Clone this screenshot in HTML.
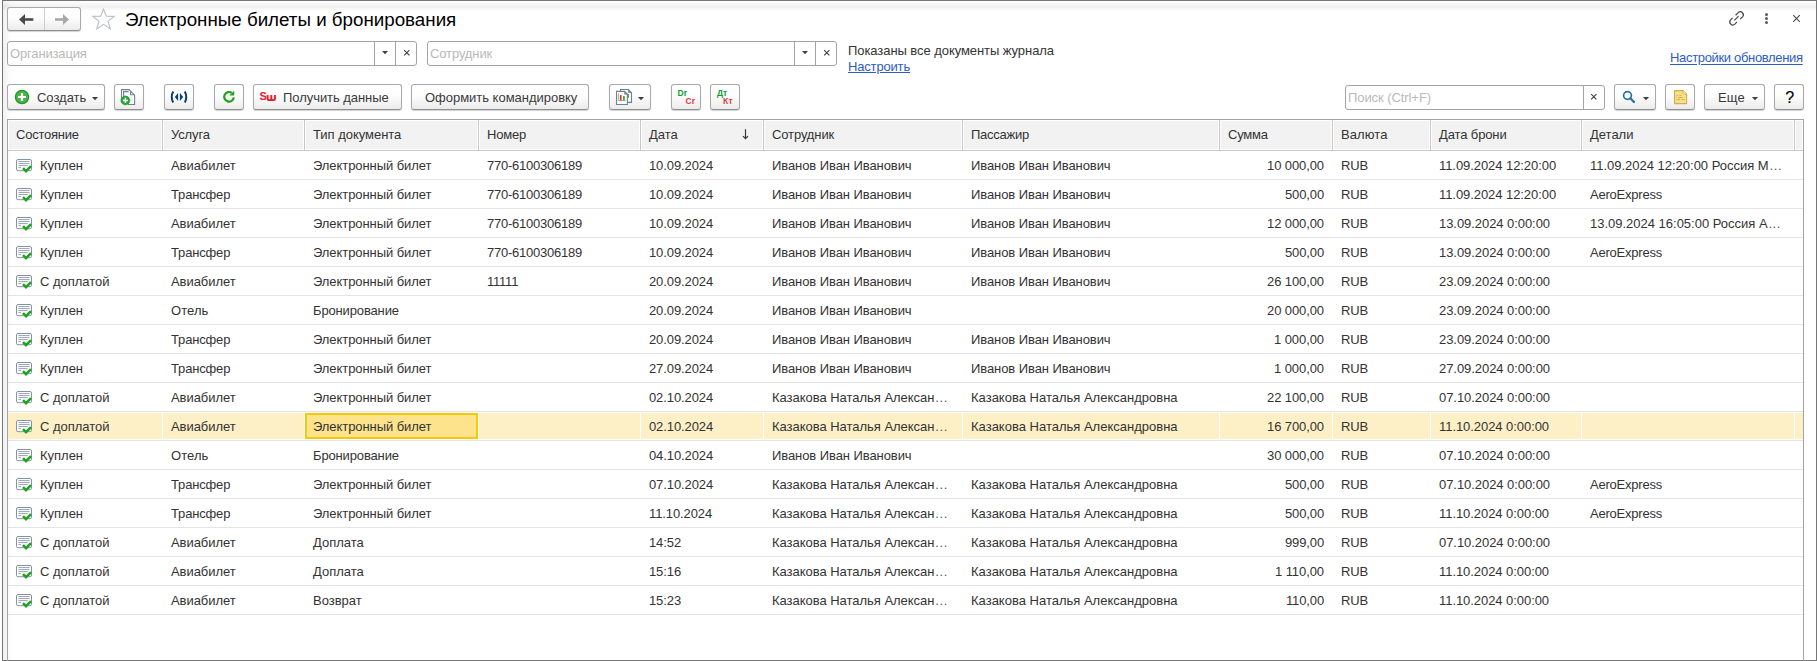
<!DOCTYPE html><html><head><meta charset="utf-8"><title>Электронные билеты и бронирования</title><style>
*{box-sizing:border-box}
html,body{margin:0;padding:0}
body{width:1817px;height:661px;overflow:hidden;position:relative;background:#fff;font-family:"Liberation Sans",sans-serif;font-size:13px;color:#333}
.a{position:absolute}
.t{position:absolute;white-space:nowrap;line-height:16px;height:16px}
.btn{position:absolute;top:84px;height:26px;border:1px solid #a9a9a9;border-bottom-color:#8f8f8f;border-radius:3px;background:linear-gradient(#fff 0%,#fdfdfd 45%,#ebebeb 100%);box-shadow:0 1px 1px rgba(0,0,0,0.18)}
.fld{position:absolute;height:25px;border:1px solid #a4a4a4;border-radius:3px;background:#fff}
.sep{position:absolute;top:0;bottom:0;width:1px;background:#a4a4a4}
.ph{color:#b4b4b4}
.hd{position:absolute;top:120px;height:30px;background:#f2f2f2;border:1px solid #fff;border-bottom-color:#fff}
.hs{position:absolute;top:120px;height:30px;width:1px;background:#c9c9c9}
.rl{position:absolute;left:8px;width:1795px;height:1px;background:#e4e4e4}
.lnk{color:#2c58b8;text-decoration:underline}
</style></head><body><div class="a" style="left:2px;top:0;width:1815px;height:661px;border:1px solid #767676;"></div>
<div class="a" style="left:3px;top:1px;width:9px;height:659px;background:linear-gradient(90deg,rgba(0,0,0,0.055),rgba(0,0,0,0))"></div>
<div class="a" style="left:3px;top:1px;width:1813px;height:10px;background:linear-gradient(rgba(0,0,0,0) 0%,rgba(0,0,0,0.048) 45%,rgba(0,0,0,0.055) 60%,rgba(0,0,0,0) 100%)"></div>
<div class="btn" style="left:7px;top:7px;width:74px;height:24px;"></div>
<div class="a" style="left:44px;top:8px;width:1px;height:22px;background:#cfcfcf"></div>
<svg class="a" style="left:17px;top:12px" width="18" height="15" viewBox="0 0 18 15"><path d="M2 7.5 L8 2 L8 13 Z" fill="#4b4b4b"/><rect x="7" y="6.2" width="9.3" height="2.6" fill="#4b4b4b"/></svg>
<svg class="a" style="left:53px;top:12px" width="18" height="15" viewBox="0 0 18 15"><path d="M16 7.5 L10 2 L10 13 Z" fill="#a8a8a8"/><rect x="2" y="6.2" width="9" height="2.6" fill="#a8a8a8"/></svg>
<svg class="a" style="left:91px;top:7px" width="25" height="24" viewBox="0 0 25 24"><path d="M12.5 2.3 L15.3 9.3 L23.1 9.4 L17 14.3 L19.4 22.0 L12.5 17.4 L5.6 22.0 L8 14.3 L1.9 9.4 L9.7 9.3 Z" fill="none" stroke="#b9c0c8" stroke-width="1.1" stroke-linejoin="miter"/></svg>
<div class="t" style="left:125px;top:12.10px;font-size:18.75px;color:#000;">Электронные билеты и бронирования</div>
<svg class="a" style="left:1720px;top:6px" width="40" height="24" viewBox="0 0 40 24"><g fill="none" stroke="#454545" stroke-width="1.2"><path d="M15.6 9.25 L18.23 6.63 A3 3 0 0 1 22.47 10.87 L20.14 13.2"/><path d="M12.61 11.85 L10.63 13.83 A3 3 0 0 0 14.87 18.07 L16.99 15.95"/><path d="M14.4 14.4 L18.6 10.2"/></g></svg>
<div class="a" style="left:1765px;top:13.0px;width:3px;height:3px;border-radius:50%;background:#5a5a5a"></div>
<div class="a" style="left:1765px;top:17.1px;width:3px;height:3px;border-radius:50%;background:#5a5a5a"></div>
<div class="a" style="left:1765px;top:21.2px;width:3px;height:3px;border-radius:50%;background:#5a5a5a"></div>
<svg class="a" style="left:1791px;top:13px" width="11" height="11" viewBox="0 0 11 11"><path d="M2.2 2.2 L8.8 8.8 M8.8 2.2 L2.2 8.8" stroke="#4a4a4a" stroke-width="1.1"/></svg>
<div class="fld" style="left:7px;top:41px;width:410px;"></div>
<div class="a" style="left:374px;top:42px;width:1px;height:23px;background:#a4a4a4"></div>
<div class="a" style="left:395px;top:42px;width:1px;height:23px;background:#a4a4a4"></div>
<svg class="a" style="left:382px;top:51px" width="7" height="4" viewBox="0 0 7 4"><path d="M0 0 L6 0 L3 3.3 Z" fill="#404040"/></svg>
<svg class="a" style="left:403px;top:49px" width="8" height="8" viewBox="0 0 8 8"><path d="M1.2 1.2 L6.4 6.4 M6.4 1.2 L1.2 6.4" stroke="#3c3c3c" stroke-width="1.1"/></svg>
<div class="t" style="left:10px;top:45.50px;color:#b9b9b9;letter-spacing:-0.154px;">Организация</div>
<div class="fld" style="left:427px;top:41px;width:410px;"></div>
<div class="a" style="left:794px;top:42px;width:1px;height:23px;background:#a4a4a4"></div>
<div class="a" style="left:815px;top:42px;width:1px;height:23px;background:#a4a4a4"></div>
<svg class="a" style="left:802px;top:51px" width="7" height="4" viewBox="0 0 7 4"><path d="M0 0 L6 0 L3 3.3 Z" fill="#404040"/></svg>
<svg class="a" style="left:823px;top:49px" width="8" height="8" viewBox="0 0 8 8"><path d="M1.2 1.2 L6.4 6.4 M6.4 1.2 L1.2 6.4" stroke="#3c3c3c" stroke-width="1.1"/></svg>
<div class="t" style="left:430px;top:45.50px;color:#b9b9b9;letter-spacing:-0.113px;">Сотрудник</div>
<div class="t" style="left:848px;top:42.50px;letter-spacing:-0.066px;">Показаны все документы журнала</div>
<div class="t" style="left:848px;top:58.90px;letter-spacing:-0.169px;color:#2d5cc2;text-decoration:underline;text-underline-offset:1px;">Настроить</div>
<div class="t" style="left:1670px;top:50.20px;color:#2d5cc2;text-decoration:underline;text-underline-offset:1.5px;letter-spacing:-0.33px;">Настройки обновления</div>
<div class="btn" style="left:7px;width:98px;"></div>
<svg class="a" style="left:14px;top:89px" width="16" height="16" viewBox="0 0 16 16"><circle cx="8" cy="8" r="6.6" fill="#4cb24c" stroke="#1f9a2a" stroke-width="1.3"/><path d="M8 4 V12 M4 8 H12" stroke="#fff" stroke-width="2.2"/></svg>
<div class="t" style="left:37px;top:90.20px;color:#3a3a3a;letter-spacing:-0.017px;">Создать</div>
<svg class="a" style="left:91px;top:97px" width="8" height="5" viewBox="0 0 8 5"><path d="M0.9 0 L7.1 0 L4 3.3 Z" fill="#404040"/></svg>
<div class="btn" style="left:114px;width:30px;"></div>
<svg class="a" style="left:116px;top:86px" width="26" height="22" viewBox="0 0 26 22"><path d="M5.5 16.5 V3.6 H13 L18.6 9.2 V18.5 H12" fill="#fff" stroke="#6e8196" stroke-width="1.1"/><path d="M7.6 12 V5.6 H12.6" fill="none" stroke="#6e8196" stroke-width="1.1"/><path d="M14.4 5.4 V8.8 H18" fill="none" stroke="#6e8196" stroke-width="1.1"/><rect x="15" y="11.5" width="1.6" height="5" fill="#e8e8e8"/><circle cx="9.4" cy="14.4" r="4.4" fill="#2aa53a" stroke="#17902a" stroke-width="0.7"/><path d="M9.4 11.8 V17 M6.8 14.4 H12" stroke="#fff" stroke-width="1.5"/></svg>
<div class="btn" style="left:164px;width:30px;"></div>
<svg class="a" style="left:169px;top:89px" width="20" height="16" viewBox="0 0 20 16"><path d="M4.2 2.5 Q1.3 8 4.2 13.5" fill="none" stroke="#0d3f6e" stroke-width="2"/><path d="M15.8 2.5 Q18.7 8 15.8 13.5" fill="none" stroke="#0d3f6e" stroke-width="2"/><path d="M9.1 4.1 L5.8 8 L9.1 11.9 Z" fill="#0d3f6e"/><path d="M10.9 4.1 L14.2 8 L10.9 11.9 Z" fill="#0d3f6e"/></svg>
<div class="btn" style="left:214px;width:30px;"></div>
<svg class="a" style="left:216px;top:86px" width="26" height="22" viewBox="0 0 26 22"><path d="M17.8 11.4 A4.8 4.8 0 1 1 15.8 6.9" fill="none" stroke="#22a022" stroke-width="2.2"/><path d="M13.8 9.2 L18 5.2 L18 9.2 Z" fill="#22a022" stroke="#22a022" stroke-width="0.5" stroke-linejoin="round"/></svg>
<div class="btn" style="left:253px;width:149px;"></div>
<div class="t" style="left:259.6px;top:88.3px;font-size:11px;font-weight:bold;color:#e8202a;line-height:16px">S</div>
<svg class="a" style="left:266px;top:93px" width="11" height="9" viewBox="0 0 11 9"><path d="M1.6 1.9 V5.2 Q1.6 7.1 3.5 7.1 Q5.3 7.1 5.3 5.2 V1.9 M5.3 5.2 Q5.3 7.1 7.1 7.1 Q9 7.1 9 5.2 V1.9" fill="none" stroke="#e8202a" stroke-width="1.9"/></svg>
<div class="t" style="left:283px;top:90.20px;color:#3a3a3a;letter-spacing:-0.052px;">Получить данные</div>
<div class="btn" style="left:411px;width:178px;"></div>
<div class="t" style="left:425px;top:90.20px;color:#3a3a3a;letter-spacing:-0.022px;">Оформить командировку</div>
<div class="btn" style="left:609px;width:42px;"></div>
<svg class="a" style="left:612px;top:86px" width="22" height="22" viewBox="0 0 22 22"><path d="M8.5 3.5 H16.3 L19.5 6.7 V16.4 H8.5 Z" fill="#fff" stroke="#6f8090" stroke-width="1.1"/><path d="M16.3 3.5 V6.7 H19.5 Z" fill="#7d8d9c" stroke="#6f8090" stroke-width="0.6"/><rect x="15.2" y="8" width="1.7" height="3.9" fill="#3aaa2a"/><path d="M4.5 5.4 H12.6 L15.4 8.3 V18.5 H4.5 Z" fill="#fff" stroke="#6f8090" stroke-width="1.1"/><path d="M12.6 5.4 V8.3 H15.4 Z" fill="#7d8d9c" stroke="#6f8090" stroke-width="0.6"/><path d="M6.3 7.3 V14.6 H13.6" fill="none" stroke="#8a8a8a" stroke-width="0.8"/><rect x="7.9" y="9" width="1.7" height="5.2" fill="#e8301e"/><rect x="11" y="10.1" width="1.8" height="4.1" fill="#3aaa2a"/></svg>
<svg class="a" style="left:637px;top:97px" width="8" height="5" viewBox="0 0 8 5"><path d="M0.9 0 L7.1 0 L4 3.3 Z" fill="#404040"/></svg>
<div class="btn" style="left:671px;width:30px;"></div>
<div class="t" style="left:677.6px;top:87px;font-size:8.5px;font-weight:bold;color:#109a3c;line-height:12px">Dr</div>
<div class="t" style="left:685.5px;top:95px;font-size:8.5px;font-weight:bold;color:#e03a3e;line-height:12px">Cr</div>
<div class="btn" style="left:710px;width:30px;"></div>
<div class="t" style="left:717px;top:87px;font-size:8.5px;font-weight:bold;color:#109a3c;line-height:12px">Дт</div>
<div class="t" style="left:723px;top:95px;font-size:8.5px;letter-spacing:0.4px;font-weight:bold;color:#e03a3e;line-height:12px">Кт</div>
<div class="fld" style="left:1345px;top:85px;width:260px;"></div>
<div class="a" style="left:1583px;top:86px;width:1px;height:23px;background:#a4a4a4"></div>
<svg class="a" style="left:1590px;top:93px" width="8" height="8" viewBox="0 0 8 8"><path d="M1.2 1.2 L6.4 6.4 M6.4 1.2 L1.2 6.4" stroke="#3c3c3c" stroke-width="1.1"/></svg>
<div class="t" style="left:1348px;top:89.50px;color:#b9b9b9;letter-spacing:-0.074px;">Поиск (Ctrl+F)</div>
<div class="btn" style="left:1614px;width:42px;"></div>
<svg class="a" style="left:1621px;top:89px" width="16" height="16" viewBox="0 0 16 16"><circle cx="6.5" cy="6.5" r="3.9" fill="none" stroke="#2a70a8" stroke-width="1.7"/><path d="M9.3 9.3 L13 13" stroke="#2a70a8" stroke-width="2.3" stroke-linecap="round"/></svg>
<svg class="a" style="left:1642px;top:97px" width="8" height="5" viewBox="0 0 8 5"><path d="M0.9 0 L7.1 0 L4 3.3 Z" fill="#404040"/></svg>
<div class="btn" style="left:1665px;width:30px;"></div>
<svg class="a" style="left:1673px;top:89px" width="16" height="17" viewBox="0 0 16 17"><path d="M1.6 1.6 H10 Q13.6 4.6 13.6 5.4 V14.6 H1.6 Z" fill="#f6e08c" stroke="#d5ac45" stroke-width="1.1" stroke-linejoin="round"/><path d="M10 1.8 V4.2 Q10 5.2 11 5.2 H13.4" fill="#fff6d0" stroke="#d5ac45" stroke-width="0.9"/><path d="M3.6 6.4 H5 M6.3 6.4 H8.6 M3.6 8.5 H4.1 M5.3 8.5 H9.8 M3.6 10.6 H7 M8.2 10.6 H11.6" stroke="#d4ac48" stroke-width="0.9"/></svg>
<div class="btn" style="left:1704px;width:61px;"></div>
<div class="t" style="left:1718px;top:90.20px;color:#3a3a3a;letter-spacing:0.134px;">Еще</div>
<svg class="a" style="left:1751px;top:97px" width="8" height="5" viewBox="0 0 8 5"><path d="M0.9 0 L7.1 0 L4 3.3 Z" fill="#404040"/></svg>
<div class="btn" style="left:1774px;width:30px;"></div>
<div class="t" style="left:1785.3px;top:89.6px;font-size:16px;color:#000;line-height:16px;-webkit-text-stroke:0.15px #000">?</div>
<div class="a" style="left:7px;top:119px;width:1797px;height:560px;border:1px solid #a3a3a3;"></div>
<div class="a" style="left:8px;top:120px;width:154px;height:30px;background:#f2f2f2;border:1px solid #fff;"></div>
<div class="a" style="left:163px;top:120px;width:141px;height:30px;background:#f2f2f2;border:1px solid #fff;"></div>
<div class="a" style="left:305px;top:120px;width:173px;height:30px;background:#f2f2f2;border:1px solid #fff;"></div>
<div class="a" style="left:479px;top:120px;width:161px;height:30px;background:#f2f2f2;border:1px solid #fff;"></div>
<div class="a" style="left:641px;top:120px;width:122px;height:30px;background:#f2f2f2;border:1px solid #fff;"></div>
<div class="a" style="left:764px;top:120px;width:198px;height:30px;background:#f2f2f2;border:1px solid #fff;"></div>
<div class="a" style="left:963px;top:120px;width:256px;height:30px;background:#f2f2f2;border:1px solid #fff;"></div>
<div class="a" style="left:1220px;top:120px;width:112px;height:30px;background:#f2f2f2;border:1px solid #fff;"></div>
<div class="a" style="left:1333px;top:120px;width:97px;height:30px;background:#f2f2f2;border:1px solid #fff;"></div>
<div class="a" style="left:1431px;top:120px;width:150px;height:30px;background:#f2f2f2;border:1px solid #fff;"></div>
<div class="a" style="left:1582px;top:120px;width:212px;height:30px;background:#f2f2f2;border:1px solid #fff;"></div>
<div class="a" style="left:1795px;top:120px;width:8px;height:30px;background:#f2f2f2;border:1px solid #fff;"></div>
<div class="a" style="left:162px;top:120px;width:1px;height:30px;background:#c8c8c8"></div>
<div class="a" style="left:304px;top:120px;width:1px;height:30px;background:#c8c8c8"></div>
<div class="a" style="left:478px;top:120px;width:1px;height:30px;background:#c8c8c8"></div>
<div class="a" style="left:640px;top:120px;width:1px;height:30px;background:#c8c8c8"></div>
<div class="a" style="left:763px;top:120px;width:1px;height:30px;background:#c8c8c8"></div>
<div class="a" style="left:962px;top:120px;width:1px;height:30px;background:#c8c8c8"></div>
<div class="a" style="left:1219px;top:120px;width:1px;height:30px;background:#c8c8c8"></div>
<div class="a" style="left:1332px;top:120px;width:1px;height:30px;background:#c8c8c8"></div>
<div class="a" style="left:1430px;top:120px;width:1px;height:30px;background:#c8c8c8"></div>
<div class="a" style="left:1581px;top:120px;width:1px;height:30px;background:#c8c8c8"></div>
<div class="a" style="left:1794px;top:120px;width:1px;height:30px;background:#c8c8c8"></div>
<div class="a" style="left:8px;top:150px;width:1795px;height:1px;background:#c9c9c9"></div>
<div class="t" style="left:16px;top:126.50px;letter-spacing:-0.224px;">Состояние</div>
<div class="t" style="left:171px;top:126.50px;letter-spacing:-0.136px;">Услуга</div>
<div class="t" style="left:313px;top:126.50px;letter-spacing:-0.030px;">Тип документа</div>
<div class="t" style="left:487px;top:126.50px;letter-spacing:-0.203px;">Номер</div>
<div class="t" style="left:649px;top:126.50px;letter-spacing:-0.055px;">Дата</div>
<div class="t" style="left:772px;top:126.50px;letter-spacing:-0.113px;">Сотрудник</div>
<div class="t" style="left:971px;top:126.50px;letter-spacing:-0.249px;">Пассажир</div>
<div class="t" style="left:1228px;top:126.50px;letter-spacing:-0.199px;">Сумма</div>
<div class="t" style="left:1341px;top:126.50px;letter-spacing:0.097px;">Валюта</div>
<div class="t" style="left:1439px;top:126.50px;letter-spacing:-0.118px;">Дата брони</div>
<div class="t" style="left:1590px;top:126.50px;letter-spacing:-0.011px;">Детали</div>
<svg class="a" style="left:741px;top:128px" width="9" height="12" viewBox="0 0 9 12"><path d="M4.5 1.2 V10.4" stroke="#3a3a3a" stroke-width="1.2"/><path d="M2 8.1 L4.5 10.6 L7 8.1" fill="none" stroke="#3a3a3a" stroke-width="1.3"/></svg>
<div class="rl" style="top:179px"></div>
<svg class="a" style="left:15px;top:159px" width="18" height="15" viewBox="0 0 18 15"><rect x="1.5" y="0.5" width="15" height="11.2" rx="1.5" fill="#fff" stroke="#8494a6" stroke-width="1"/><path d="M3.4 2.6 H14.6 M3.4 4.6 H14.6 M3.4 6.6 H12.6 M3.4 8.6 H6" stroke="#8c99a8" stroke-width="0.9"/><path d="M8 9.2 L11 12.2 L16 7.2" fill="none" stroke="#1fa31f" stroke-width="2.6" stroke-linejoin="miter"/></svg>
<div class="t" style="left:40px;top:157.50px;letter-spacing:-0.018px;">Куплен</div>
<div class="t" style="left:171px;top:157.50px;letter-spacing:-0.061px;">Авиабилет</div>
<div class="t" style="left:313px;top:157.50px;letter-spacing:-0.077px;">Электронный билет</div>
<div class="t" style="left:487px;top:157.50px;letter-spacing:-0.237px;">770-6100306189</div>
<div class="t" style="left:649px;top:157.50px;letter-spacing:-0.106px;">10.09.2024</div>
<div class="t" style="left:772px;top:157.50px;letter-spacing:-0.075px;">Иванов Иван Иванович</div>
<div class="t" style="left:971px;top:157.50px;letter-spacing:-0.075px;">Иванов Иван Иванович</div>
<div class="t" style="left:1219px;width:105px;top:157.50px;text-align:right;letter-spacing:-0.093px;">10 000,00</div>
<div class="t" style="left:1341px;top:157.50px;letter-spacing:-0.149px;">RUB</div>
<div class="t" style="left:1439px;top:157.50px;letter-spacing:-0.067px;">11.09.2024 12:20:00</div>
<div class="t" style="left:1590px;top:157.50px;letter-spacing:-0.012px;">11.09.2024 12:20:00 Россия М<span style="letter-spacing:0.6px;color:#555;margin-left:0.8px">...</span></div>
<div class="rl" style="top:208px"></div>
<svg class="a" style="left:15px;top:188px" width="18" height="15" viewBox="0 0 18 15"><rect x="1.5" y="0.5" width="15" height="11.2" rx="1.5" fill="#fff" stroke="#8494a6" stroke-width="1"/><path d="M3.4 2.6 H14.6 M3.4 4.6 H14.6 M3.4 6.6 H12.6 M3.4 8.6 H6" stroke="#8c99a8" stroke-width="0.9"/><path d="M8 9.2 L11 12.2 L16 7.2" fill="none" stroke="#1fa31f" stroke-width="2.6" stroke-linejoin="miter"/></svg>
<div class="t" style="left:40px;top:186.50px;letter-spacing:-0.018px;">Куплен</div>
<div class="t" style="left:171px;top:186.50px;letter-spacing:-0.154px;">Трансфер</div>
<div class="t" style="left:313px;top:186.50px;letter-spacing:-0.077px;">Электронный билет</div>
<div class="t" style="left:487px;top:186.50px;letter-spacing:-0.237px;">770-6100306189</div>
<div class="t" style="left:649px;top:186.50px;letter-spacing:-0.106px;">10.09.2024</div>
<div class="t" style="left:772px;top:186.50px;letter-spacing:-0.075px;">Иванов Иван Иванович</div>
<div class="t" style="left:971px;top:186.50px;letter-spacing:-0.075px;">Иванов Иван Иванович</div>
<div class="t" style="left:1219px;width:105px;top:186.50px;text-align:right;letter-spacing:-0.127px;">500,00</div>
<div class="t" style="left:1341px;top:186.50px;letter-spacing:-0.149px;">RUB</div>
<div class="t" style="left:1439px;top:186.50px;letter-spacing:-0.067px;">11.09.2024 12:20:00</div>
<div class="t" style="left:1590px;top:186.50px;letter-spacing:-0.220px;">AeroExpress</div>
<div class="rl" style="top:237px"></div>
<svg class="a" style="left:15px;top:217px" width="18" height="15" viewBox="0 0 18 15"><rect x="1.5" y="0.5" width="15" height="11.2" rx="1.5" fill="#fff" stroke="#8494a6" stroke-width="1"/><path d="M3.4 2.6 H14.6 M3.4 4.6 H14.6 M3.4 6.6 H12.6 M3.4 8.6 H6" stroke="#8c99a8" stroke-width="0.9"/><path d="M8 9.2 L11 12.2 L16 7.2" fill="none" stroke="#1fa31f" stroke-width="2.6" stroke-linejoin="miter"/></svg>
<div class="t" style="left:40px;top:215.50px;letter-spacing:-0.018px;">Куплен</div>
<div class="t" style="left:171px;top:215.50px;letter-spacing:-0.061px;">Авиабилет</div>
<div class="t" style="left:313px;top:215.50px;letter-spacing:-0.077px;">Электронный билет</div>
<div class="t" style="left:487px;top:215.50px;letter-spacing:-0.237px;">770-6100306189</div>
<div class="t" style="left:649px;top:215.50px;letter-spacing:-0.106px;">10.09.2024</div>
<div class="t" style="left:772px;top:215.50px;letter-spacing:-0.075px;">Иванов Иван Иванович</div>
<div class="t" style="left:971px;top:215.50px;letter-spacing:-0.075px;">Иванов Иван Иванович</div>
<div class="t" style="left:1219px;width:105px;top:215.50px;text-align:right;letter-spacing:-0.093px;">12 000,00</div>
<div class="t" style="left:1341px;top:215.50px;letter-spacing:-0.149px;">RUB</div>
<div class="t" style="left:1439px;top:215.50px;letter-spacing:-0.058px;">13.09.2024 0:00:00</div>
<div class="t" style="left:1590px;top:215.50px;letter-spacing:-0.007px;">13.09.2024 16:05:00 Россия А<span style="letter-spacing:0.6px;color:#555;margin-left:0.8px">...</span></div>
<div class="rl" style="top:266px"></div>
<svg class="a" style="left:15px;top:246px" width="18" height="15" viewBox="0 0 18 15"><rect x="1.5" y="0.5" width="15" height="11.2" rx="1.5" fill="#fff" stroke="#8494a6" stroke-width="1"/><path d="M3.4 2.6 H14.6 M3.4 4.6 H14.6 M3.4 6.6 H12.6 M3.4 8.6 H6" stroke="#8c99a8" stroke-width="0.9"/><path d="M8 9.2 L11 12.2 L16 7.2" fill="none" stroke="#1fa31f" stroke-width="2.6" stroke-linejoin="miter"/></svg>
<div class="t" style="left:40px;top:244.50px;letter-spacing:-0.018px;">Куплен</div>
<div class="t" style="left:171px;top:244.50px;letter-spacing:-0.154px;">Трансфер</div>
<div class="t" style="left:313px;top:244.50px;letter-spacing:-0.077px;">Электронный билет</div>
<div class="t" style="left:487px;top:244.50px;letter-spacing:-0.237px;">770-6100306189</div>
<div class="t" style="left:649px;top:244.50px;letter-spacing:-0.106px;">10.09.2024</div>
<div class="t" style="left:772px;top:244.50px;letter-spacing:-0.075px;">Иванов Иван Иванович</div>
<div class="t" style="left:971px;top:244.50px;letter-spacing:-0.075px;">Иванов Иван Иванович</div>
<div class="t" style="left:1219px;width:105px;top:244.50px;text-align:right;letter-spacing:-0.127px;">500,00</div>
<div class="t" style="left:1341px;top:244.50px;letter-spacing:-0.149px;">RUB</div>
<div class="t" style="left:1439px;top:244.50px;letter-spacing:-0.058px;">13.09.2024 0:00:00</div>
<div class="t" style="left:1590px;top:244.50px;letter-spacing:-0.220px;">AeroExpress</div>
<div class="rl" style="top:295px"></div>
<svg class="a" style="left:15px;top:275px" width="18" height="15" viewBox="0 0 18 15"><rect x="1.5" y="0.5" width="15" height="11.2" rx="1.5" fill="#fff" stroke="#8494a6" stroke-width="1"/><path d="M3.4 2.6 H14.6 M3.4 4.6 H14.6 M3.4 6.6 H12.6 M3.4 8.6 H6" stroke="#8c99a8" stroke-width="0.9"/><path d="M8 9.2 L11 12.2 L16 7.2" fill="none" stroke="#1fa31f" stroke-width="2.6" stroke-linejoin="miter"/></svg>
<div class="t" style="left:40px;top:273.50px;letter-spacing:-0.012px;">С доплатой</div>
<div class="t" style="left:171px;top:273.50px;letter-spacing:-0.061px;">Авиабилет</div>
<div class="t" style="left:313px;top:273.50px;letter-spacing:-0.077px;">Электронный билет</div>
<div class="t" style="left:487px;top:273.50px;letter-spacing:-0.230px;">11111</div>
<div class="t" style="left:649px;top:273.50px;letter-spacing:-0.106px;">20.09.2024</div>
<div class="t" style="left:772px;top:273.50px;letter-spacing:-0.075px;">Иванов Иван Иванович</div>
<div class="t" style="left:971px;top:273.50px;letter-spacing:-0.075px;">Иванов Иван Иванович</div>
<div class="t" style="left:1219px;width:105px;top:273.50px;text-align:right;letter-spacing:-0.093px;">26 100,00</div>
<div class="t" style="left:1341px;top:273.50px;letter-spacing:-0.149px;">RUB</div>
<div class="t" style="left:1439px;top:273.50px;letter-spacing:-0.058px;">23.09.2024 0:00:00</div>
<div class="rl" style="top:324px"></div>
<svg class="a" style="left:15px;top:304px" width="18" height="15" viewBox="0 0 18 15"><rect x="1.5" y="0.5" width="15" height="11.2" rx="1.5" fill="#fff" stroke="#8494a6" stroke-width="1"/><path d="M3.4 2.6 H14.6 M3.4 4.6 H14.6 M3.4 6.6 H12.6 M3.4 8.6 H6" stroke="#8c99a8" stroke-width="0.9"/><path d="M8 9.2 L11 12.2 L16 7.2" fill="none" stroke="#1fa31f" stroke-width="2.6" stroke-linejoin="miter"/></svg>
<div class="t" style="left:40px;top:302.50px;letter-spacing:-0.018px;">Куплен</div>
<div class="t" style="left:171px;top:302.50px;letter-spacing:0.069px;">Отель</div>
<div class="t" style="left:313px;top:302.50px;letter-spacing:-0.142px;">Бронирование</div>
<div class="t" style="left:649px;top:302.50px;letter-spacing:-0.106px;">20.09.2024</div>
<div class="t" style="left:772px;top:302.50px;letter-spacing:-0.075px;">Иванов Иван Иванович</div>
<div class="t" style="left:1219px;width:105px;top:302.50px;text-align:right;letter-spacing:-0.093px;">20 000,00</div>
<div class="t" style="left:1341px;top:302.50px;letter-spacing:-0.149px;">RUB</div>
<div class="t" style="left:1439px;top:302.50px;letter-spacing:-0.058px;">23.09.2024 0:00:00</div>
<div class="rl" style="top:353px"></div>
<svg class="a" style="left:15px;top:333px" width="18" height="15" viewBox="0 0 18 15"><rect x="1.5" y="0.5" width="15" height="11.2" rx="1.5" fill="#fff" stroke="#8494a6" stroke-width="1"/><path d="M3.4 2.6 H14.6 M3.4 4.6 H14.6 M3.4 6.6 H12.6 M3.4 8.6 H6" stroke="#8c99a8" stroke-width="0.9"/><path d="M8 9.2 L11 12.2 L16 7.2" fill="none" stroke="#1fa31f" stroke-width="2.6" stroke-linejoin="miter"/></svg>
<div class="t" style="left:40px;top:331.50px;letter-spacing:-0.018px;">Куплен</div>
<div class="t" style="left:171px;top:331.50px;letter-spacing:-0.154px;">Трансфер</div>
<div class="t" style="left:313px;top:331.50px;letter-spacing:-0.077px;">Электронный билет</div>
<div class="t" style="left:649px;top:331.50px;letter-spacing:-0.106px;">20.09.2024</div>
<div class="t" style="left:772px;top:331.50px;letter-spacing:-0.075px;">Иванов Иван Иванович</div>
<div class="t" style="left:971px;top:331.50px;letter-spacing:-0.075px;">Иванов Иван Иванович</div>
<div class="t" style="left:1219px;width:105px;top:331.50px;text-align:right;letter-spacing:-0.075px;">1 000,00</div>
<div class="t" style="left:1341px;top:331.50px;letter-spacing:-0.149px;">RUB</div>
<div class="t" style="left:1439px;top:331.50px;letter-spacing:-0.058px;">23.09.2024 0:00:00</div>
<div class="rl" style="top:382px"></div>
<svg class="a" style="left:15px;top:362px" width="18" height="15" viewBox="0 0 18 15"><rect x="1.5" y="0.5" width="15" height="11.2" rx="1.5" fill="#fff" stroke="#8494a6" stroke-width="1"/><path d="M3.4 2.6 H14.6 M3.4 4.6 H14.6 M3.4 6.6 H12.6 M3.4 8.6 H6" stroke="#8c99a8" stroke-width="0.9"/><path d="M8 9.2 L11 12.2 L16 7.2" fill="none" stroke="#1fa31f" stroke-width="2.6" stroke-linejoin="miter"/></svg>
<div class="t" style="left:40px;top:360.50px;letter-spacing:-0.018px;">Куплен</div>
<div class="t" style="left:171px;top:360.50px;letter-spacing:-0.154px;">Трансфер</div>
<div class="t" style="left:313px;top:360.50px;letter-spacing:-0.077px;">Электронный билет</div>
<div class="t" style="left:649px;top:360.50px;letter-spacing:-0.106px;">27.09.2024</div>
<div class="t" style="left:772px;top:360.50px;letter-spacing:-0.075px;">Иванов Иван Иванович</div>
<div class="t" style="left:971px;top:360.50px;letter-spacing:-0.075px;">Иванов Иван Иванович</div>
<div class="t" style="left:1219px;width:105px;top:360.50px;text-align:right;letter-spacing:-0.075px;">1 000,00</div>
<div class="t" style="left:1341px;top:360.50px;letter-spacing:-0.149px;">RUB</div>
<div class="t" style="left:1439px;top:360.50px;letter-spacing:-0.058px;">27.09.2024 0:00:00</div>
<div class="rl" style="top:411px"></div>
<svg class="a" style="left:15px;top:391px" width="18" height="15" viewBox="0 0 18 15"><rect x="1.5" y="0.5" width="15" height="11.2" rx="1.5" fill="#fff" stroke="#8494a6" stroke-width="1"/><path d="M3.4 2.6 H14.6 M3.4 4.6 H14.6 M3.4 6.6 H12.6 M3.4 8.6 H6" stroke="#8c99a8" stroke-width="0.9"/><path d="M8 9.2 L11 12.2 L16 7.2" fill="none" stroke="#1fa31f" stroke-width="2.6" stroke-linejoin="miter"/></svg>
<div class="t" style="left:40px;top:389.50px;letter-spacing:-0.012px;">С доплатой</div>
<div class="t" style="left:171px;top:389.50px;letter-spacing:-0.061px;">Авиабилет</div>
<div class="t" style="left:313px;top:389.50px;letter-spacing:-0.077px;">Электронный билет</div>
<div class="t" style="left:649px;top:389.50px;letter-spacing:-0.106px;">02.10.2024</div>
<div class="t" style="left:772px;top:389.50px;letter-spacing:-0.030px;">Казакова Наталья Алексан<span style="letter-spacing:0.6px;color:#555;margin-left:0.8px">...</span></div>
<div class="t" style="left:971px;top:389.50px;letter-spacing:0.003px;">Казакова Наталья Александровна</div>
<div class="t" style="left:1219px;width:105px;top:389.50px;text-align:right;letter-spacing:-0.093px;">22 100,00</div>
<div class="t" style="left:1341px;top:389.50px;letter-spacing:-0.149px;">RUB</div>
<div class="t" style="left:1439px;top:389.50px;letter-spacing:-0.058px;">07.10.2024 0:00:00</div>
<div class="a" style="left:8px;top:413px;width:1795px;height:26px;background:#fdf0c7"></div>
<div class="a" style="left:162px;top:413px;width:1px;height:26px;background:#fff"></div>
<div class="a" style="left:304px;top:413px;width:1px;height:26px;background:#fff"></div>
<div class="a" style="left:478px;top:413px;width:1px;height:26px;background:#fff"></div>
<div class="a" style="left:640px;top:413px;width:1px;height:26px;background:#fff"></div>
<div class="a" style="left:763px;top:413px;width:1px;height:26px;background:#fff"></div>
<div class="a" style="left:962px;top:413px;width:1px;height:26px;background:#fff"></div>
<div class="a" style="left:1219px;top:413px;width:1px;height:26px;background:#fff"></div>
<div class="a" style="left:1332px;top:413px;width:1px;height:26px;background:#fff"></div>
<div class="a" style="left:1430px;top:413px;width:1px;height:26px;background:#fff"></div>
<div class="a" style="left:1581px;top:413px;width:1px;height:26px;background:#fff"></div>
<div class="a" style="left:1794px;top:413px;width:1px;height:26px;background:#fff"></div>
<div class="a" style="left:305px;top:413px;width:173px;height:26px;background:#fde38c;border:2px solid #f7c70a"></div>
<div class="rl" style="top:440px"></div>
<svg class="a" style="left:15px;top:420px" width="18" height="15" viewBox="0 0 18 15"><rect x="1.5" y="0.5" width="15" height="11.2" rx="1.5" fill="#fff" stroke="#8494a6" stroke-width="1"/><path d="M3.4 2.6 H14.6 M3.4 4.6 H14.6 M3.4 6.6 H12.6 M3.4 8.6 H6" stroke="#8c99a8" stroke-width="0.9"/><path d="M8 9.2 L11 12.2 L16 7.2" fill="none" stroke="#1fa31f" stroke-width="2.6" stroke-linejoin="miter"/></svg>
<div class="t" style="left:40px;top:418.50px;letter-spacing:-0.012px;">С доплатой</div>
<div class="t" style="left:171px;top:418.50px;letter-spacing:-0.061px;">Авиабилет</div>
<div class="t" style="left:313px;top:418.50px;letter-spacing:-0.077px;">Электронный билет</div>
<div class="t" style="left:649px;top:418.50px;letter-spacing:-0.106px;">02.10.2024</div>
<div class="t" style="left:772px;top:418.50px;letter-spacing:-0.030px;">Казакова Наталья Алексан<span style="letter-spacing:0.6px;color:#555;margin-left:0.8px">...</span></div>
<div class="t" style="left:971px;top:418.50px;letter-spacing:0.003px;">Казакова Наталья Александровна</div>
<div class="t" style="left:1219px;width:105px;top:418.50px;text-align:right;letter-spacing:-0.093px;">16 700,00</div>
<div class="t" style="left:1341px;top:418.50px;letter-spacing:-0.149px;">RUB</div>
<div class="t" style="left:1439px;top:418.50px;letter-spacing:-0.058px;">11.10.2024 0:00:00</div>
<div class="rl" style="top:469px"></div>
<svg class="a" style="left:15px;top:449px" width="18" height="15" viewBox="0 0 18 15"><rect x="1.5" y="0.5" width="15" height="11.2" rx="1.5" fill="#fff" stroke="#8494a6" stroke-width="1"/><path d="M3.4 2.6 H14.6 M3.4 4.6 H14.6 M3.4 6.6 H12.6 M3.4 8.6 H6" stroke="#8c99a8" stroke-width="0.9"/><path d="M8 9.2 L11 12.2 L16 7.2" fill="none" stroke="#1fa31f" stroke-width="2.6" stroke-linejoin="miter"/></svg>
<div class="t" style="left:40px;top:447.50px;letter-spacing:-0.018px;">Куплен</div>
<div class="t" style="left:171px;top:447.50px;letter-spacing:0.069px;">Отель</div>
<div class="t" style="left:313px;top:447.50px;letter-spacing:-0.142px;">Бронирование</div>
<div class="t" style="left:649px;top:447.50px;letter-spacing:-0.106px;">04.10.2024</div>
<div class="t" style="left:772px;top:447.50px;letter-spacing:-0.075px;">Иванов Иван Иванович</div>
<div class="t" style="left:1219px;width:105px;top:447.50px;text-align:right;letter-spacing:-0.093px;">30 000,00</div>
<div class="t" style="left:1341px;top:447.50px;letter-spacing:-0.149px;">RUB</div>
<div class="t" style="left:1439px;top:447.50px;letter-spacing:-0.058px;">07.10.2024 0:00:00</div>
<div class="rl" style="top:498px"></div>
<svg class="a" style="left:15px;top:478px" width="18" height="15" viewBox="0 0 18 15"><rect x="1.5" y="0.5" width="15" height="11.2" rx="1.5" fill="#fff" stroke="#8494a6" stroke-width="1"/><path d="M3.4 2.6 H14.6 M3.4 4.6 H14.6 M3.4 6.6 H12.6 M3.4 8.6 H6" stroke="#8c99a8" stroke-width="0.9"/><path d="M8 9.2 L11 12.2 L16 7.2" fill="none" stroke="#1fa31f" stroke-width="2.6" stroke-linejoin="miter"/></svg>
<div class="t" style="left:40px;top:476.50px;letter-spacing:-0.018px;">Куплен</div>
<div class="t" style="left:171px;top:476.50px;letter-spacing:-0.154px;">Трансфер</div>
<div class="t" style="left:313px;top:476.50px;letter-spacing:-0.077px;">Электронный билет</div>
<div class="t" style="left:649px;top:476.50px;letter-spacing:-0.106px;">07.10.2024</div>
<div class="t" style="left:772px;top:476.50px;letter-spacing:-0.030px;">Казакова Наталья Алексан<span style="letter-spacing:0.6px;color:#555;margin-left:0.8px">...</span></div>
<div class="t" style="left:971px;top:476.50px;letter-spacing:0.003px;">Казакова Наталья Александровна</div>
<div class="t" style="left:1219px;width:105px;top:476.50px;text-align:right;letter-spacing:-0.127px;">500,00</div>
<div class="t" style="left:1341px;top:476.50px;letter-spacing:-0.149px;">RUB</div>
<div class="t" style="left:1439px;top:476.50px;letter-spacing:-0.058px;">07.10.2024 0:00:00</div>
<div class="t" style="left:1590px;top:476.50px;letter-spacing:-0.220px;">AeroExpress</div>
<div class="rl" style="top:527px"></div>
<svg class="a" style="left:15px;top:507px" width="18" height="15" viewBox="0 0 18 15"><rect x="1.5" y="0.5" width="15" height="11.2" rx="1.5" fill="#fff" stroke="#8494a6" stroke-width="1"/><path d="M3.4 2.6 H14.6 M3.4 4.6 H14.6 M3.4 6.6 H12.6 M3.4 8.6 H6" stroke="#8c99a8" stroke-width="0.9"/><path d="M8 9.2 L11 12.2 L16 7.2" fill="none" stroke="#1fa31f" stroke-width="2.6" stroke-linejoin="miter"/></svg>
<div class="t" style="left:40px;top:505.50px;letter-spacing:-0.018px;">Куплен</div>
<div class="t" style="left:171px;top:505.50px;letter-spacing:-0.154px;">Трансфер</div>
<div class="t" style="left:313px;top:505.50px;letter-spacing:-0.077px;">Электронный билет</div>
<div class="t" style="left:649px;top:505.50px;letter-spacing:-0.106px;">11.10.2024</div>
<div class="t" style="left:772px;top:505.50px;letter-spacing:-0.030px;">Казакова Наталья Алексан<span style="letter-spacing:0.6px;color:#555;margin-left:0.8px">...</span></div>
<div class="t" style="left:971px;top:505.50px;letter-spacing:0.003px;">Казакова Наталья Александровна</div>
<div class="t" style="left:1219px;width:105px;top:505.50px;text-align:right;letter-spacing:-0.127px;">500,00</div>
<div class="t" style="left:1341px;top:505.50px;letter-spacing:-0.149px;">RUB</div>
<div class="t" style="left:1439px;top:505.50px;letter-spacing:-0.058px;">11.10.2024 0:00:00</div>
<div class="t" style="left:1590px;top:505.50px;letter-spacing:-0.220px;">AeroExpress</div>
<div class="rl" style="top:556px"></div>
<svg class="a" style="left:15px;top:536px" width="18" height="15" viewBox="0 0 18 15"><rect x="1.5" y="0.5" width="15" height="11.2" rx="1.5" fill="#fff" stroke="#8494a6" stroke-width="1"/><path d="M3.4 2.6 H14.6 M3.4 4.6 H14.6 M3.4 6.6 H12.6 M3.4 8.6 H6" stroke="#8c99a8" stroke-width="0.9"/><path d="M8 9.2 L11 12.2 L16 7.2" fill="none" stroke="#1fa31f" stroke-width="2.6" stroke-linejoin="miter"/></svg>
<div class="t" style="left:40px;top:534.50px;letter-spacing:-0.012px;">С доплатой</div>
<div class="t" style="left:171px;top:534.50px;letter-spacing:-0.061px;">Авиабилет</div>
<div class="t" style="left:313px;top:534.50px;letter-spacing:-0.010px;">Доплата</div>
<div class="t" style="left:649px;top:534.50px;letter-spacing:-0.106px;">14:52</div>
<div class="t" style="left:772px;top:534.50px;letter-spacing:-0.030px;">Казакова Наталья Алексан<span style="letter-spacing:0.6px;color:#555;margin-left:0.8px">...</span></div>
<div class="t" style="left:971px;top:534.50px;letter-spacing:0.003px;">Казакова Наталья Александровна</div>
<div class="t" style="left:1219px;width:105px;top:534.50px;text-align:right;letter-spacing:-0.127px;">999,00</div>
<div class="t" style="left:1341px;top:534.50px;letter-spacing:-0.149px;">RUB</div>
<div class="t" style="left:1439px;top:534.50px;letter-spacing:-0.058px;">07.10.2024 0:00:00</div>
<div class="rl" style="top:585px"></div>
<svg class="a" style="left:15px;top:565px" width="18" height="15" viewBox="0 0 18 15"><rect x="1.5" y="0.5" width="15" height="11.2" rx="1.5" fill="#fff" stroke="#8494a6" stroke-width="1"/><path d="M3.4 2.6 H14.6 M3.4 4.6 H14.6 M3.4 6.6 H12.6 M3.4 8.6 H6" stroke="#8c99a8" stroke-width="0.9"/><path d="M8 9.2 L11 12.2 L16 7.2" fill="none" stroke="#1fa31f" stroke-width="2.6" stroke-linejoin="miter"/></svg>
<div class="t" style="left:40px;top:563.50px;letter-spacing:-0.012px;">С доплатой</div>
<div class="t" style="left:171px;top:563.50px;letter-spacing:-0.061px;">Авиабилет</div>
<div class="t" style="left:313px;top:563.50px;letter-spacing:-0.010px;">Доплата</div>
<div class="t" style="left:649px;top:563.50px;letter-spacing:-0.106px;">15:16</div>
<div class="t" style="left:772px;top:563.50px;letter-spacing:-0.030px;">Казакова Наталья Алексан<span style="letter-spacing:0.6px;color:#555;margin-left:0.8px">...</span></div>
<div class="t" style="left:971px;top:563.50px;letter-spacing:0.003px;">Казакова Наталья Александровна</div>
<div class="t" style="left:1219px;width:105px;top:563.50px;text-align:right;letter-spacing:-0.075px;">1 110,00</div>
<div class="t" style="left:1341px;top:563.50px;letter-spacing:-0.149px;">RUB</div>
<div class="t" style="left:1439px;top:563.50px;letter-spacing:-0.058px;">11.10.2024 0:00:00</div>
<div class="rl" style="top:614px"></div>
<svg class="a" style="left:15px;top:594px" width="18" height="15" viewBox="0 0 18 15"><rect x="1.5" y="0.5" width="15" height="11.2" rx="1.5" fill="#fff" stroke="#8494a6" stroke-width="1"/><path d="M3.4 2.6 H14.6 M3.4 4.6 H14.6 M3.4 6.6 H12.6 M3.4 8.6 H6" stroke="#8c99a8" stroke-width="0.9"/><path d="M8 9.2 L11 12.2 L16 7.2" fill="none" stroke="#1fa31f" stroke-width="2.6" stroke-linejoin="miter"/></svg>
<div class="t" style="left:40px;top:592.50px;letter-spacing:-0.012px;">С доплатой</div>
<div class="t" style="left:171px;top:592.50px;letter-spacing:-0.061px;">Авиабилет</div>
<div class="t" style="left:313px;top:592.50px;letter-spacing:-0.026px;">Возврат</div>
<div class="t" style="left:649px;top:592.50px;letter-spacing:-0.106px;">15:23</div>
<div class="t" style="left:772px;top:592.50px;letter-spacing:-0.030px;">Казакова Наталья Алексан<span style="letter-spacing:0.6px;color:#555;margin-left:0.8px">...</span></div>
<div class="t" style="left:971px;top:592.50px;letter-spacing:0.003px;">Казакова Наталья Александровна</div>
<div class="t" style="left:1219px;width:105px;top:592.50px;text-align:right;letter-spacing:-0.127px;">110,00</div>
<div class="t" style="left:1341px;top:592.50px;letter-spacing:-0.149px;">RUB</div>
<div class="t" style="left:1439px;top:592.50px;letter-spacing:-0.058px;">11.10.2024 0:00:00</div></body></html>
